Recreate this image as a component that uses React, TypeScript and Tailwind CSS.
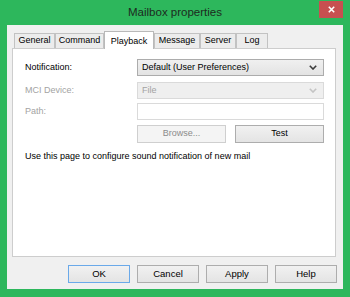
import React from 'react';

const font = { fontFamily: '"Liberation Sans", Arial, sans-serif' };

function Chevron({ disabled }: { disabled?: boolean }) {
  return (
    <svg width="8" height="5" viewBox="0 0 8 5" className="shrink-0">
      <path d="M0.8 0.8 L4 4 L7.2 0.8" fill="none" stroke={disabled ? '#c4c4c4' : '#3a3a3a'} strokeWidth="1.6" />
    </svg>
  );
}

function Tab({ label, width, active }: { label: string; width: string; active?: boolean }) {
  if (active) {
    return (
      <div className={`${width} h-[18px] bg-white border border-b-0 border-[#b9b9b9] flex items-start justify-center pt-[3px] text-[9px] text-black`}>
        {label}
      </div>
    );
  }
  return (
    <div className={`${width} h-[15px] mb-[1px] bg-[#ececec] border border-b-0 border-[#c2c2c2] flex items-center justify-center text-[9px] text-black`}>
      {label}
    </div>
  );
}

function DialogButton({ label, focused }: { label: string; focused?: boolean }) {
  return (
    <button
      className={`w-[62px] h-[18px] flex items-center justify-center text-[9.5px] text-black bg-gradient-to-b from-[#f1f1f1] to-[#e4e4e4] border ${
        focused ? 'border-[#6aa9e9]' : 'border-[#adadad]'
      }`}
    >
      {label}
    </button>
  );
}

export default function App() {
  return (
    <div className="w-[350px] h-[297px] bg-[#2db75c] flex flex-col select-none" style={font}>
      {/* title bar */}
      <div className="relative h-[25px] flex items-center justify-center">
        <span className="text-[11.5px] text-[#1d2a20]">Mailbox properties</span>
        <div className="absolute right-[7px] top-[1px] w-[24px] h-[17px] bg-[#c75050] flex items-center justify-center">
          <svg width="7" height="7" viewBox="0 0 7 7">
            <path d="M0.8 0.8 L6.2 6.2 M6.2 0.8 L0.8 6.2" stroke="#ffffff" strokeWidth="1.6" />
          </svg>
        </div>
      </div>

      {/* client area */}
      <div className="mx-[7px] mb-[8px] flex-1 bg-[#f0f0f0] flex flex-col pt-[6px]">
        <div className="flex items-end pl-[7px] -mb-px relative z-10">
          <Tab label="General" width="w-[41px]" />
          <Tab label="Command" width="w-[49px]" />
          <Tab label="Playback" width="w-[50px]" active />
          <Tab label="Message" width="w-[46px]" />
          <Tab label="Server" width="w-[36px]" />
          <Tab label="Log" width="w-[32px]" />
        </div>

        <div className="ml-[5px] mr-[7px] h-[209px] bg-white border border-[#cdcdcd] pt-[10px] pl-[12px] pr-[11px] text-[9px]">
          <div className="flex flex-col">
            <div className="flex items-center h-[17px]">
              <span className="w-[112px] text-black">Notification:</span>
              <div className="flex-1 h-[17px] flex items-center justify-between pl-[4px] pr-[6px] bg-gradient-to-b from-[#f0f0f0] to-[#e3e3e3] border border-[#acacac] text-black">
                <span>Default (User Preferences)</span>
                <Chevron />
              </div>
            </div>

            <div className="flex items-center h-[17px] mt-[6px]">
              <span className="w-[112px] text-[#a3a3a3]">MCI Device:</span>
              <div className="flex-1 h-[17px] flex items-center justify-between pl-[4px] pr-[6px] bg-[#efefef] border border-[#dadada] text-[#a3a3a3]">
                <span>File</span>
                <Chevron disabled />
              </div>
            </div>

            <div className="flex items-center h-[17px] mt-[4px]">
              <span className="w-[112px] text-[#a3a3a3]">Path:</span>
              <div className="flex-1 h-[17px] bg-white border border-[#dadada]" />
            </div>

            <div className="flex items-center h-[18px] mt-[5px] pl-[112px] gap-[9px]">
              <div className="flex-1 h-[18px] flex items-center justify-center bg-[#f4f4f4] border border-[#cfcfcf] text-[#8b8b8b]">
                Browse...
              </div>
              <div className="flex-1 h-[18px] flex items-center justify-center bg-gradient-to-b from-[#f1f1f1] to-[#e4e4e4] border border-[#adadad] text-black">
                Test
              </div>
            </div>

            <p className="mt-[8px] leading-[11px] text-black">Use this page to configure sound notification of new mail</p>
          </div>
        </div>

        <div className="flex justify-end gap-[7px] mt-[8px] pr-[6px]">
          <DialogButton label="OK" focused />
          <DialogButton label="Cancel" />
          <DialogButton label="Apply" />
          <DialogButton label="Help" />
        </div>
      </div>
    </div>
  );
}
